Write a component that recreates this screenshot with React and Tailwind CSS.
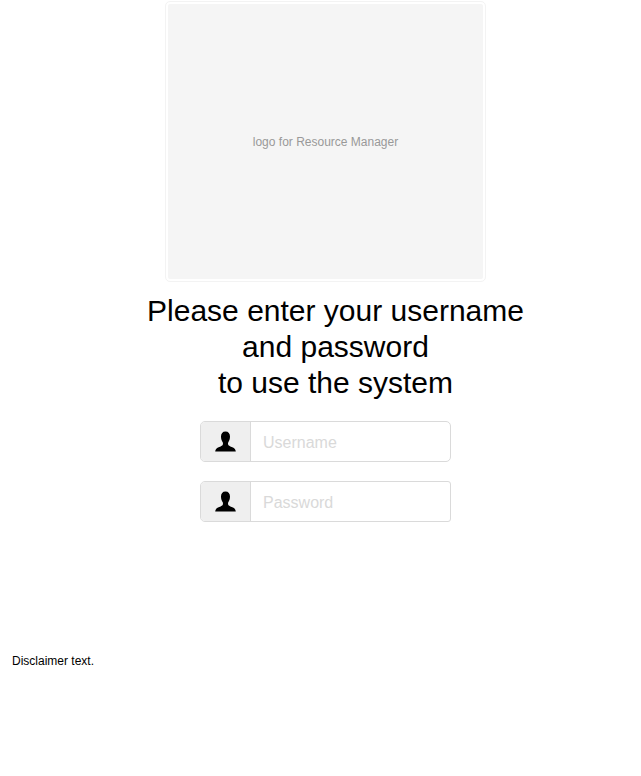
function UserIcon() {
  return (
    <svg width="22" height="22" viewBox="-0.5 0 22 22" className="mr-px block">
      <path
        d="M11 .6c2.900 0 4.500 2 4.500 5 0 2.300-.7 4.300-1.700 5.600-.4.6-.4 2.400.2 3 .8.8 2.700 1.600 4.500 2.400 1.800.8 2.600 2.200 2.800 4H.7c.2-1.800 1-3.200 2.800-4 1.800-.8 3.700-1.600 4.500-2.400.6-.6.6-2.400.2-3-1-1.300-1.700-3.300-1.700-5.600 0-3 1.600-5 4.500-5z"
        fill="#000"
      />
    </svg>
  );
}

function Field({ type, placeholder, corners }) {
  return (
    <div className={`flex h-[41px] w-[251px] overflow-hidden border border-[#dadada] bg-white ${corners}`}>
      <div className="flex w-[50px] shrink-0 items-center justify-center border-r border-[#dadada] bg-[#efefef]">
        <UserIcon />
      </div>
      <input
        type={type}
        placeholder={placeholder}
        className="min-w-0 flex-1 pl-3 pt-[3px] text-[16px] outline-none placeholder:text-[#d9d9d9]"
      />
    </div>
  );
}

export default function App() {
  return (
    <main className="h-[776px] w-[641px] overflow-hidden bg-white font-['Liberation_Sans',Arial,sans-serif] text-black">
      <div className="ml-[165px] mt-px flex h-[281px] w-[321px] rounded-[5px] border border-[#f3f3f3] p-[2px]">
        <div className="flex flex-1 items-center justify-center rounded-[2px] bg-[#f5f5f5] text-[12px] text-[#999]">
          logo for Resource Manager
        </div>
      </div>
      <h1 className="ml-[135px] mt-[11px] w-[401px] text-center text-[30px] leading-[36px]">
        Please enter your username
        <br />
        and password
        <br />
        to use the system
      </h1>
      <form className="ml-[200px] mt-5 flex flex-col gap-[19px]">
        <Field type="text" placeholder="Username" corners="rounded-[5px]" />
        <Field type="password" placeholder="Password" corners="rounded-l-[5px] rounded-r-[3px]" />
      </form>
      <p className="ml-3 mt-[131px] text-[12px] leading-4">Disclaimer text.</p>
    </main>
  );
}
